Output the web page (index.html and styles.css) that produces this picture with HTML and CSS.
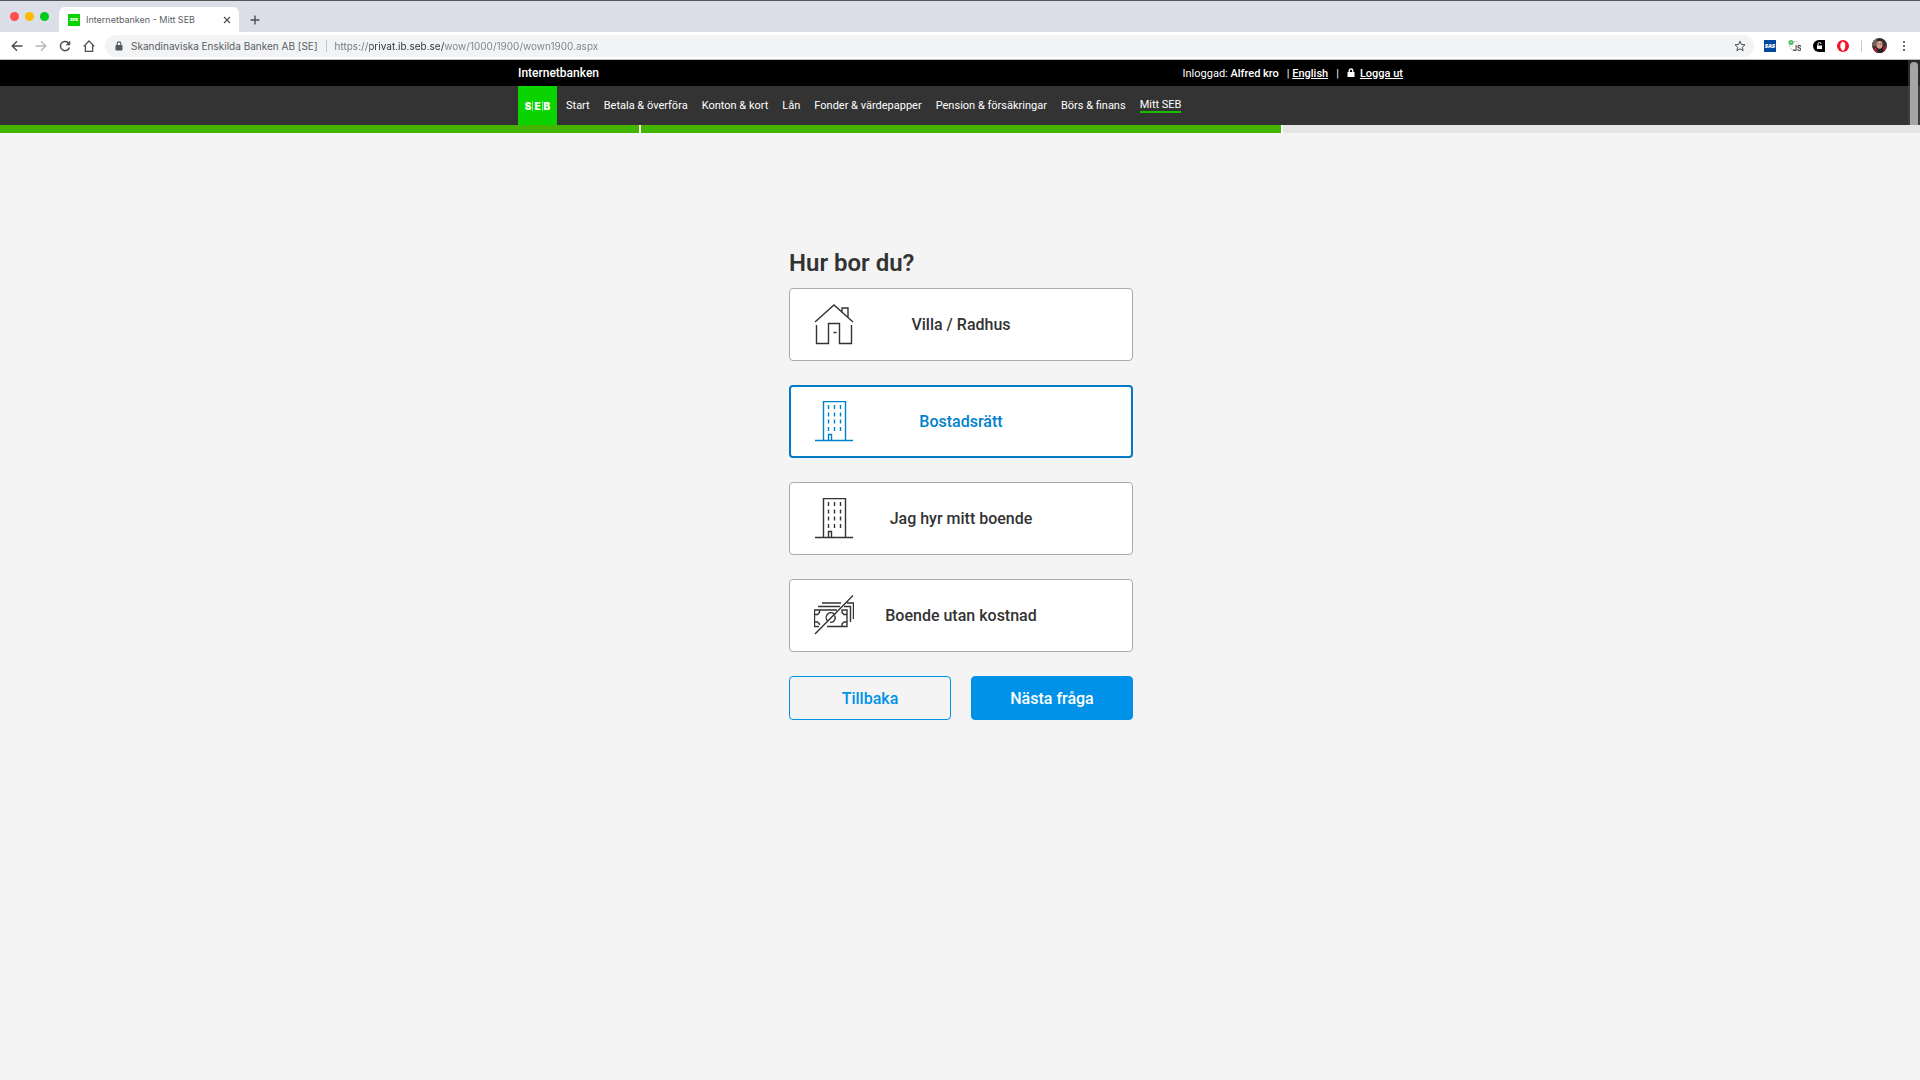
FILE: index.html
```html
<!DOCTYPE html>
<html lang="sv">
<head>
    <meta charset="UTF-8">
    <meta name="viewport" content="width=device-width, initial-scale=1.0">
    <title>Internetbanken - Mitt SEB</title>
    <link rel="stylesheet" href="styles.css">
</head>
<body>
    <div class="browser">
        <div class="tabstrip">
            <div class="lights">
                <span class="light red"></span>
                <span class="light yellow"></span>
                <span class="light green"></span>
            </div>
            <div class="tab">
                <span class="favicon">SEB</span>
                <span class="tab-title">Internetbanken - Mitt SEB</span>
                <button class="icon-btn" aria-label="Close tab">
                    <svg width="8" height="8" viewBox="0 0 8 8"><path d="M1 1l6 6M7 1L1 7" stroke="#4b4e53" stroke-width="1.2"/></svg>
                </button>
            </div>
            <button class="icon-btn new-tab" aria-label="New tab">
                <svg width="10" height="10" viewBox="0 0 10 10"><path d="M5 .5v9M.5 5h9" stroke="#4b4e53" stroke-width="1.4"/></svg>
            </button>
        </div>
        <div class="toolbar">
            <div class="nav-buttons">
                <button class="icon-btn" aria-label="Back">
                    <svg width="12" height="12" viewBox="0 0 12 12" fill="none" stroke="#4b4e53" stroke-width="1.4"><path d="M11.5 6H1.5M6 1.2L1.2 6 6 10.8"/></svg>
                </button>
                <button class="icon-btn" aria-label="Forward">
                    <svg width="12" height="12" viewBox="0 0 12 12" fill="none" stroke="#b6b8bb" stroke-width="1.4"><path d="M.5 6h10M6 1.2L10.8 6 6 10.8"/></svg>
                </button>
                <button class="icon-btn" aria-label="Reload">
                    <svg width="12" height="12" viewBox="0 0 12 12" fill="none" stroke="#4b4e53" stroke-width="1.5"><path d="M10.4 7.4A4.6 4.6 0 1 1 9.2 2.7L10.2 3.8"/><path d="M11.2.6v4.6H6.6z" fill="#4b4e53" stroke="none"/></svg>
                </button>
                <button class="icon-btn" aria-label="Home">
                    <svg width="12" height="12" viewBox="0 0 12 12" fill="none" stroke="#4b4e53" stroke-width="1.3"><path d="M.7 6.4L6 1l5.300 5.400M2.400 5.500v5.800h7.200V5.500"/></svg>
                </button>
            </div>
            <div class="address">
                <svg width="8" height="10" viewBox="0 0 8 10"><rect x=".5" y="4" width="7" height="5.500" rx=".8" fill="#55585d"/><path d="M2.200 4.200V2.700a1.800 1.800 0 0 1 3.600 0v1.500" fill="none" stroke="#55585d" stroke-width="1.100"/></svg>
                <span class="owner">Skandinaviska Enskilda Banken AB [SE]</span>
                <input class="url" type="text" aria-label="Address" value="https://privat.ib.seb.se/wow/1000/1900/wown1900.aspx">
                <button class="icon-btn" aria-label="Bookmark">
                    <svg width="12" height="12" viewBox="0 0 12 12"><path d="M6 1.200l1.400 3.300 3.600.3-2.700 2.400.8 3.500L6 8.800l-3.100 1.900.8-3.500L1 4.800l3.600-.3z" fill="none" stroke="#4b4e53" stroke-width="1"/></svg>
                </button>
            </div>
            <div class="extensions">
                <button class="icon-btn sas" aria-label="SAS">SAS</button>
                <button class="icon-btn" aria-label="JS">
                    <svg width="13" height="12" viewBox="0 0 13 12"><path d="M5 1.500h4l2 3M1.500 5l2 5 3 1" fill="none" stroke="#bbb" stroke-dasharray="2 1"/><circle cx="3" cy="2.500" r="2.500" fill="#46b95a"/><circle cx="3" cy="2.300" r="1.100" fill="#8fdc9b"/><text x="5" y="11" class="js">JS</text></svg>
                </button>
                <button class="icon-btn" aria-label="Ghostery">
                    <svg width="12" height="12" viewBox="0 0 12 12"><path d="M6 0h6v12H6A6 6 0 0 1 6 0z" fill="#000"/><rect x="4" y="5.500" width="5" height="3.500" fill="#fff"/><path d="M5 5.500V4a1.500 1.500 0 0 1 3 0" fill="none" stroke="#fff"/></svg>
                </button>
                <button class="icon-btn" aria-label="Adblock">
                    <svg width="12" height="12" viewBox="0 0 12 12"><circle cx="6" cy="6" r="6" fill="#f3132b"/><path d="M3.500 3.500l1-.8 1-1.200 1 .5.9.5.8 1v4L7 10.500H5L3.400 7.500z" fill="#fff"/></svg>
                </button>
                <span class="divider"></span>
            </div>
            <div class="profile">
                <button class="icon-btn" aria-label="Profile">
                    <svg class="avatar" width="15" height="15" viewBox="0 0 15 15"><rect width="15" height="15" fill="#3a3034"/><path d="M0 0h5v8H0z" fill="#6c625d"/><path d="M0 15l3-5 4-1 5 1 3 3v2z" fill="#252125"/><path d="M1 11l3-2 2 6H3zM14 7l-3 3 1 4 3-3z" fill="#9d2630"/><ellipse cx="7.500" cy="6.500" rx="3" ry="4.200" fill="#d9a28d"/><path d="M4.500 4.500c0-5 6-5 6 0L9 3H6z" fill="#302528"/><path d="M5.500 6h1.500m1 0h1.500" stroke="#5a4038" stroke-width=".8"/></svg>
                </button>
                <button class="icon-btn" aria-label="Menu">
                    <svg width="4" height="12" viewBox="0 0 4 12" fill="#4b4e53"><circle cx="2" cy="2" r="1.100"/><circle cx="2" cy="6" r="1.100"/><circle cx="2" cy="10" r="1.100"/></svg>
                </button>
            </div>
        </div>
    </div>

    <header class="site-header">
        <div class="topbar">
            <div class="inner">
                <a class="brand" href="#">Internetbanken</a>
                <div class="user">
                    <span>Inloggad: <b>Alfred kro</b></span>
                    <span class="lang">| <a href="#">English</a></span>
                    <span>|</span>
                    <a class="logout" href="#"><svg width="8" height="10" viewBox="0 0 8 10"><rect x=".5" y="4" width="7" height="5" fill="#fff"/><path d="M2.200 4.500V2.800a1.800 1.800 0 0 1 3.600 0v1.700" fill="none" stroke="#fff" stroke-width="1.300"/></svg><span>Logga ut</span></a>
                </div>
            </div>
        </div>
        <div class="menubar">
            <nav class="inner">
                <a class="logo" href="#">S<i></i>E<i></i>B</a>
                <a href="#">Start</a>
                <a href="#">Betala &amp; överföra</a>
                <a href="#">Konton &amp; kort</a>
                <a href="#">Lån</a>
                <a href="#">Fonder &amp; värdepapper</a>
                <a href="#">Pension &amp; försäkringar</a>
                <a href="#">Börs &amp; finans</a>
                <a class="active" href="#">Mitt SEB</a>
            </nav>
        </div>
        <div class="scrollbar"></div>
    </header>

    <div class="progress">
        <span class="done"></span>
        <span class="done"></span>
        <span></span>
    </div>

    <main>
        <form class="question">
            <h1 id="title">Hur bor du?</h1>
            <div class="options" role="radiogroup" aria-labelledby="title">
                <label class="option" for="villa">
                    <input type="radio" name="boende" id="villa">
                    <svg width="40" height="42" viewBox="0 1 40 42"><path d="M1 19L20 2l19 17M28 9V5h6v9.500M2.500 22v18.500h12v-20h11v20h12V22M19.500 29.500h3"/></svg>
                    <span>Villa / Radhus</span>
                </label>
                <label class="option" for="bostad">
                    <input type="radio" name="boende" id="bostad" checked>
                    <svg width="40" height="42" viewBox="0 1 40 42"><path d="M1 40.500h38M9.500 40.500v-39h22v39M14.500 40.500V34.500h3v6"/><path d="M14.500 5v4m0 3.500v4m0 3v4m0 3.500v4M20.500 5v4m0 3.500v4m0 3v4m0 3.500v4M26.500 5v4m0 3.500v4m0 3v4m0 3.500v4"/></svg>
                    <span>Bostadsrätt</span>
                </label>
                <label class="option" for="hyr">
                    <input type="radio" name="boende" id="hyr">
                    <svg width="40" height="42" viewBox="0 1 40 42"><path d="M1 40.500h38M9.500 40.500v-39h22v39M14.500 40.500V34.500h3v6"/><path d="M14.500 5v4m0 3.500v4m0 3v4m0 3.500v4M20.500 5v4m0 3.500v4m0 3v4m0 3.500v4M26.500 5v4m0 3.500v4m0 3v4m0 3.500v4"/></svg>
                    <span>Jag hyr mitt boende</span>
                </label>
                <label class="option" for="utan">
                    <input type="radio" name="boende" id="utan">
                    <svg width="40" height="42" viewBox="0 1 40 42"><path d="M1 40L39 1.500M23 16H.5v16.500H5M13 32.500h20V16h-5.500M.5 20.500h3l2-2V16M.5 28h3l2 2v1M28 16v2.500l2 2h3M28 32.500V30l2-2h3M20.500 20.200a4.500 4.500 0 0 0-7 6.500M20.500 21.500a4.500 4.500 0 0 1-4.500 6.800M4 12.500h22M30 12.500h6.500V28M8 9h19M33 9h6.500v16"/></svg>
                    <span>Boende utan kostnad</span>
                </label>
            </div>
            <div class="actions">
                <button class="back" type="button">Tillbaka</button>
                <button class="next" type="button">Nästa fråga</button>
            </div>
        </form>
    </main>
</body>
</html>
```
FILE: styles.css
```css
* {
    margin: 0;
    padding: 0;
    box-sizing: border-box;
}
body {
    min-height: 100vh;
    background-color: #f4f4f4;
    color: #333;
    font-family: Roboto, "Liberation Sans", sans-serif;
}
button {
    font-family: inherit;
    cursor: pointer;
}
a {
    color: inherit;
    text-decoration: none;
}
svg {
    display: block;
    flex-shrink: 0;
}

/* browser window */
.browser {
    height: 60px;
    background-color: #dcdfe8;
    border-top: 1px solid #575558;
    border-bottom: 1px solid #bdbdbd;
    color: #5b5e63;
    font-family: Inter, sans-serif;
}
.icon-btn {
    display: flex;
    align-items: center;
    justify-content: center;
    border: none;
    background: none;
}
.tabstrip {
    display: flex;
    align-items: center;
    height: 31px;
    padding: 6px 10px 0;
}
.lights {
    display: flex;
    gap: 6px;
    padding-bottom: 6px;
}
.light {
    width: 9px;
    height: 9px;
    border-radius: 50%;
}
.red {
    background-color: #ff4e4b;
}
.yellow {
    background-color: #ffb900;
}
.green {
    background-color: #00cb1e;
}
.tab {
    display: flex;
    align-items: center;
    gap: 6px;
    width: 180px;
    height: 25px;
    margin-left: 10px;
    padding: 0 8px 0 9px;
    border-radius: 6px 6px 0 0;
    background-color: #fff;
    font-size: 9px;
}
.favicon {
    width: 12px;
    height: 12px;
    background-color: #0bd300;
    color: #fff;
    font-size: 4px;
    font-weight: 900;
    line-height: 12px;
    text-align: center;
}
.tab-title {
    flex: 1;
    white-space: nowrap;
}
.new-tab {
    margin-left: 11px;
}
.toolbar {
    display: flex;
    align-items: center;
    gap: 10px;
    height: 27px;
    padding: 0 14px 0 11px;
    background-color: #fff;
}
.nav-buttons {
    display: flex;
    gap: 12px;
}
.address {
    display: flex;
    flex: 1;
    align-items: center;
    height: 22px;
    padding: 0 8px 0 10px;
    border-radius: 11px;
    background-color: #f1f3f4;
    font-size: 10px;
}
.owner {
    margin-left: 8px;
    padding-right: 8px;
    border-right: 1px solid #c6c8ca;
    white-space: nowrap;
}
.url {
    flex: 1;
    padding-left: 8px;
    border: none;
    outline: none;
    background: linear-gradient(to right, #6f7377 43px, #2b2e33 43px, #2b2e33 117px, #7d8286 117px);
    -webkit-background-clip: text;
    background-clip: text;
    color: transparent;
    font-family: inherit;
    font-size: 10px;
}
.extensions {
    display: flex;
    align-items: center;
    gap: 12px;
}
.sas {
    width: 12px;
    height: 12px;
    background-color: #00489d;
    color: #fff;
    font-size: 5px;
    font-style: italic;
    font-weight: 900;
}
.js {
    fill: #444;
    font-size: 7px;
    font-weight: 700;
}
.divider {
    width: 1px;
    height: 12px;
    background-color: #ccc;
}
.profile {
    display: flex;
    align-items: center;
    gap: 15px;
}
.avatar {
    border-radius: 50%;
}

/* bank header */
.site-header {
    position: relative;
    color: #fff;
    font-size: 11px;
}
.inner {
    display: flex;
    align-items: center;
    width: 100%;
    max-width: 886px;
    height: 100%;
    margin: 0 auto;
    padding-left: 1px;
}
.topbar {
    height: 26px;
    background-color: #000;
}
.topbar .inner {
    justify-content: space-between;
}
.brand {
    font-size: 12px;
    font-weight: 500;
}
.user {
    display: flex;
    align-items: center;
    gap: 8px;
}
.user b,
.user a {
    font-weight: 500;
}
.user a {
    text-decoration: underline;
}
.logout {
    display: flex;
    align-items: center;
    gap: 5px;
}
.menubar {
    height: 39px;
    background-color: #333;
}
.menubar .inner {
    gap: 14px;
    white-space: nowrap;
}
.logo {
    display: flex;
    align-items: center;
    justify-content: center;
    gap: 1px;
    width: 39px;
    height: 39px;
    margin-right: -5px;
    background-color: #0bd300;
    font-family: Inter, sans-serif;
    font-size: 10px;
    font-weight: 900;
}
.logo i {
    width: 1px;
    height: 10px;
    background-color: #8ce987;
}
.active {
    border-bottom: 2px solid #18bd00;
}
.scrollbar {
    position: absolute;
    top: 0;
    right: 0;
    bottom: 0;
    width: 12px;
    padding: 2px 2px 0;
    background-color: rgba(70, 70, 70, 0.6);
}
.scrollbar::before {
    content: "";
    display: block;
    height: 100%;
    border-radius: 4px 4px 0 0;
    background-color: #a5a5a5;
}
.progress {
    display: grid;
    grid-template-columns: 33.3% 33.3% 1fr;
    gap: 2px;
    height: 8px;
    background-color: #fff;
}
.progress span {
    background-color: #e5e5e5;
}
.progress .done {
    background-color: #45b400;
}

/* question */
main {
    padding: 114px 0 40px 2px;
}
.question {
    width: 100%;
    max-width: 344px;
    margin: 0 auto;
}
h1 {
    margin-bottom: 9px;
    font-size: 24px;
    font-weight: 600;
    line-height: 32px;
}
.options {
    display: flex;
    flex-direction: column;
    gap: 24px;
}
.option {
    display: grid;
    grid-template-columns: 40px 1fr 40px;
    align-items: center;
    height: 73px;
    padding: 0 24px;
    border: 1px solid #aaa;
    border-radius: 4px;
    background-color: #fff;
    font-size: 16px;
    font-weight: 500;
    text-align: center;
    cursor: pointer;
}
.option input {
    position: absolute;
    opacity: 0;
}
.option svg {
    fill: none;
    stroke: currentColor;
    stroke-width: 1.4;
}
.option:has(input:checked) {
    padding: 0 23px;
    border: 2px solid #007ac7;
    color: #0081cc;
}
.actions {
    display: grid;
    grid-template-columns: 1fr 1fr;
    gap: 20px;
    margin-top: 24px;
}
.actions button {
    height: 44px;
    border: 1px solid #0092e9;
    border-radius: 4px;
    font-size: 16px;
    font-weight: 500;
}
.back {
    background-color: transparent;
    color: #0092e9;
}
.next {
    background-color: #0092e9;
    color: #fff;
}
```
